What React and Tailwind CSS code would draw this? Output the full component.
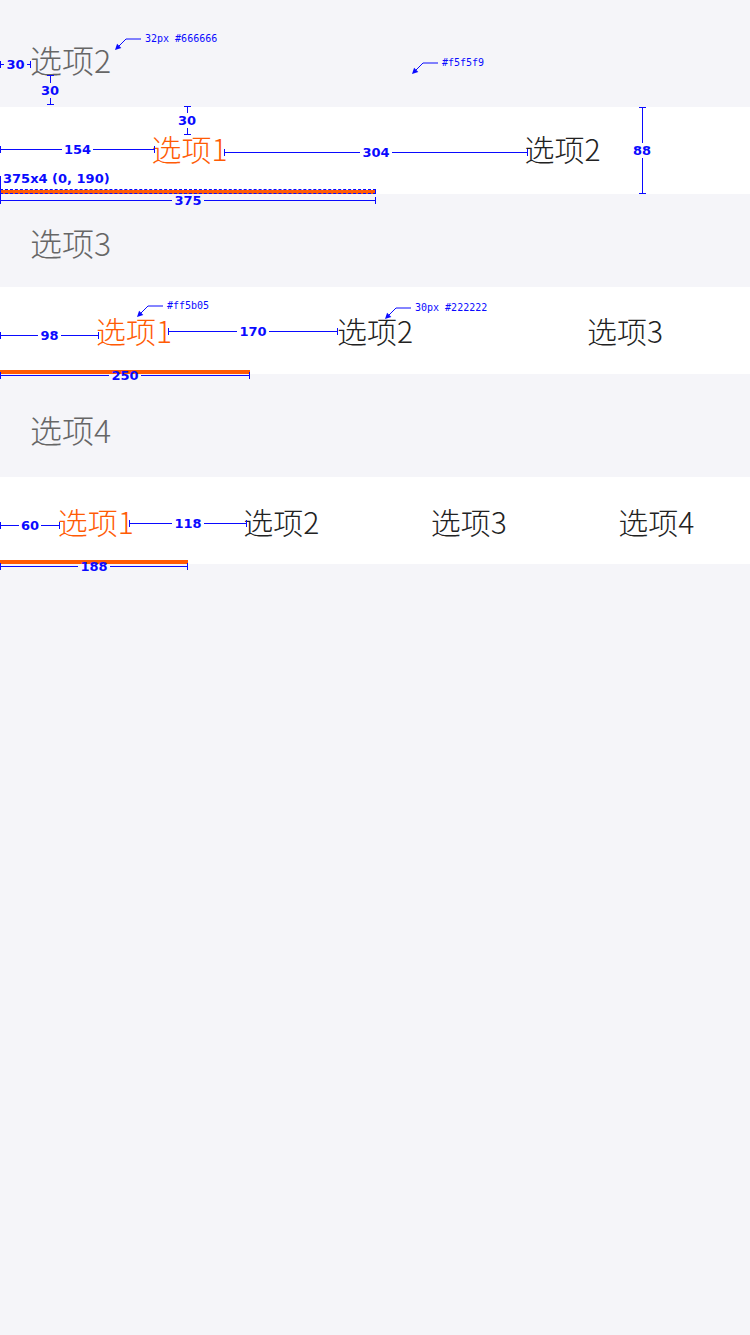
import React from "react";

const CJK = { fontFamily: '"Noto Sans CJK SC", "Noto Sans", sans-serif' };

function Title({ cls, children }) {
  return (
    <div className={`flex items-center pl-[30px] text-[32px] font-light leading-none text-[#666666] ${cls}`}>
      {children}
    </div>
  );
}

function TabBar({ tabs, activeCls = "", padCls = "" }) {
  return (
    <div className="flex h-[87px] bg-white">
      {tabs.map((t, i) => (
        <div
          key={t}
          className={`relative flex min-w-0 flex-1 items-center justify-center text-[30px] font-light leading-none ${padCls} ${
            i === 0 ? "text-[#ff5b05]" : "text-[#222222]"
          }`}
        >
          <span className={i === 0 ? activeCls : ""}>{t}</span>
          {i === 0 && <div className="absolute bottom-0 left-0 right-0 h-[4px] bg-[#ff5b05]" />}
        </div>
      ))}
    </div>
  );
}

const DIM = { fontFamily: '"DejaVu Sans", Verdana, sans-serif' };
const MONO = { fontFamily: '"DejaVu Sans Mono", "Liberation Mono", monospace' };

function HDim({ pos, label }) {
  return (
    <div
      style={DIM}
      className={`absolute flex h-[16px] items-center text-[13px] font-bold leading-none text-[#0a0aff] ${pos}`}
    >
      <span className="h-[7px] w-px bg-[#0a0aff]" />
      <span className="h-px flex-1 bg-[#0a0aff]" />
      <span className="px-[2px]">{label}</span>
      <span className="h-px flex-1 bg-[#0a0aff]" />
      <span className="h-[7px] w-px bg-[#0a0aff]" />
    </div>
  );
}

function VDim({ pos, label }) {
  return (
    <div
      style={DIM}
      className={`absolute flex w-[20px] flex-col items-center text-[13px] font-bold leading-none text-[#0a0aff] ${pos}`}
    >
      <span className="h-px w-[7px] bg-[#0a0aff]" />
      <span className="w-px flex-1 bg-[#0a0aff]" />
      <span className="py-[1px]">{label}</span>
      <span className="w-px flex-1 bg-[#0a0aff]" />
      <span className="h-px w-[7px] bg-[#0a0aff]" />
    </div>
  );
}

function Callout({ pos, text }) {
  return (
    <div className={`absolute flex items-start ${pos}`}>
      <svg width="30" height="16" viewBox="0 0 30 16" className="shrink-0">
        <path d="M28 2 H13 L4 11" fill="none" stroke="#0a0aff" strokeWidth="1" />
        <polygon points="2,13 8.3,10.9 4.1,6.7" fill="#0a0aff" />
      </svg>
      <span style={MONO} className="ml-[2px] mt-[-3px] whitespace-nowrap text-[10px] leading-[10px] text-[#0a0aff]">
        {text}
      </span>
    </div>
  );
}

export default function App() {
  return (
    <div style={CJK} className="relative min-h-[1335px] w-[750px] overflow-hidden bg-[#f5f5f9]">
      <Title cls="h-[107px] pt-[11px]">选项2</Title>
      <TabBar tabs={["选项1", "选项2"]} activeCls="ml-[4px]" padCls="pb-[5px]" />
      <Title cls="h-[93px] pt-[3px]">选项3</Title>
      <TabBar tabs={["选项1", "选项2", "选项3"]} activeCls="ml-[18px]" padCls="pb-[1px]" />
      <Title cls="h-[103px] pt-[7px]">选项4</Title>
      <TabBar tabs={["选项1", "选项2", "选项3", "选项4"]} activeCls="ml-[4px]" />

      {/* annotations */}
      <HDim pos="left-0 top-[56px] w-[31px]" label="30" />
      <VDim pos="left-[40px] top-[75px] h-[30px]" label="30" />
      <Callout pos="left-[113px] top-[37px]" text="32px #666666" />
      <Callout pos="left-[410px] top-[61px]" text="#f5f5f9" />

      <VDim pos="left-[177px] top-[106px] h-[29px]" label="30" />
      <HDim pos="left-0 top-[141px] w-[155px]" label="154" />
      <HDim pos="left-[224px] top-[144px] w-[304px]" label="304" />
      <VDim pos="left-[632px] top-[107px] h-[87px]" label="88" />
      <div
        style={DIM}
        className="absolute left-[3px] top-[172px] whitespace-nowrap text-[13px] font-bold leading-none text-[#0a0aff]"
      >
        375x4 (0, 190)
      </div>
      <div className="absolute left-0 top-[176px] h-[28px] w-px bg-[#0a0aff]" />
      <div className="absolute left-0 top-[189px] h-[5px] w-[376px] border border-dashed border-[#0a0aff]" />
      <HDim pos="left-0 top-[192px] w-[376px]" label="375" />

      <Callout pos="left-[135px] top-[304px]" text="#ff5b05" />
      <Callout pos="left-[383px] top-[306px]" text="30px #222222" />
      <HDim pos="left-0 top-[327px] w-[99px]" label="98" />
      <HDim pos="left-[168px] top-[323px] w-[170px]" label="170" />
      <HDim pos="left-0 top-[367px] w-[250px]" label="250" />

      <HDim pos="left-0 top-[517px] w-[60px]" label="60" />
      <HDim pos="left-[129px] top-[515px] w-[118px]" label="118" />
      <HDim pos="left-0 top-[558px] w-[188px]" label="188" />
    </div>
  );
}
